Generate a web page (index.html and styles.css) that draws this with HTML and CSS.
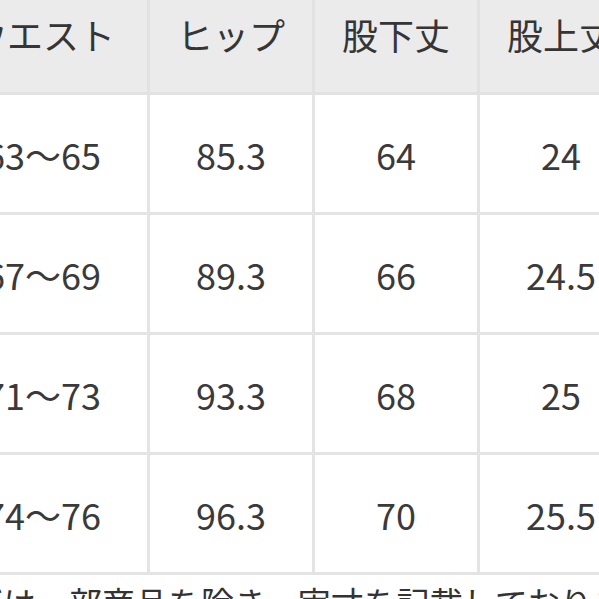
FILE: index.html
```html
<!DOCTYPE html>
<html lang="ja">
<head>
<meta charset="utf-8">
<link rel="stylesheet" href="styles.css">
</head>
<body>
<div class="page">
  <table class="size-table">
    <colgroup>
      <col class="c1"><col class="c2"><col class="c3"><col class="c4">
    </colgroup>
    <thead>
      <tr><th>ウエスト</th><th>ヒップ</th><th>股下丈</th><th>股上丈</th></tr>
    </thead>
    <tbody>
      <tr><td>63〜65</td><td>85.3</td><td>64</td><td>24</td></tr>
      <tr><td>67〜69</td><td>89.3</td><td>66</td><td>24.5</td></tr>
      <tr><td>71〜73</td><td>93.3</td><td>68</td><td>25</td></tr>
      <tr><td>74〜76</td><td>96.3</td><td>70</td><td>25.5</td></tr>
    </tbody>
  </table>
  <p class="note">※サイズは一部商品を除き、実寸を記載しております。</p>
</div>
</body>
</html>
```

FILE: styles.css
```css
html, body {
  margin: 0;
  padding: 0;
  background: #ffffff;
}
body {
  width: 599px;
  height: 599px;
  overflow: hidden;
  font-family: "Noto Sans CJK JP", "Noto Sans", sans-serif;
  color: #3a3a3a;
}
.page {
  margin-top: -28px;
  margin-left: -64px;
  width: 720px;
}
.size-table {
  border-collapse: collapse;
  table-layout: fixed;
  width: 706px;
}
.c1 { width: 211px; }
.c2 { width: 165px; }
.c3 { width: 165px; }
.c4 { width: 165px; }
.size-table th,
.size-table td {
  border: 3px solid #e4e4e4;
  height: 117px;
  padding: 0;
  text-align: center;
  vertical-align: middle;
  font-size: 36px;
  font-weight: 400;
  line-height: 1;
  white-space: nowrap;
}
.size-table th {
  background: #ebebeb;
  border-color: #e2e2e2;
  color: #353535;
}
.size-table td {
  background: #ffffff;
}
.note {
  margin: 11px 0 0 -64px;
  font-size: 33px;
  line-height: 1;
  white-space: nowrap;
  color: #333333;
}
```
